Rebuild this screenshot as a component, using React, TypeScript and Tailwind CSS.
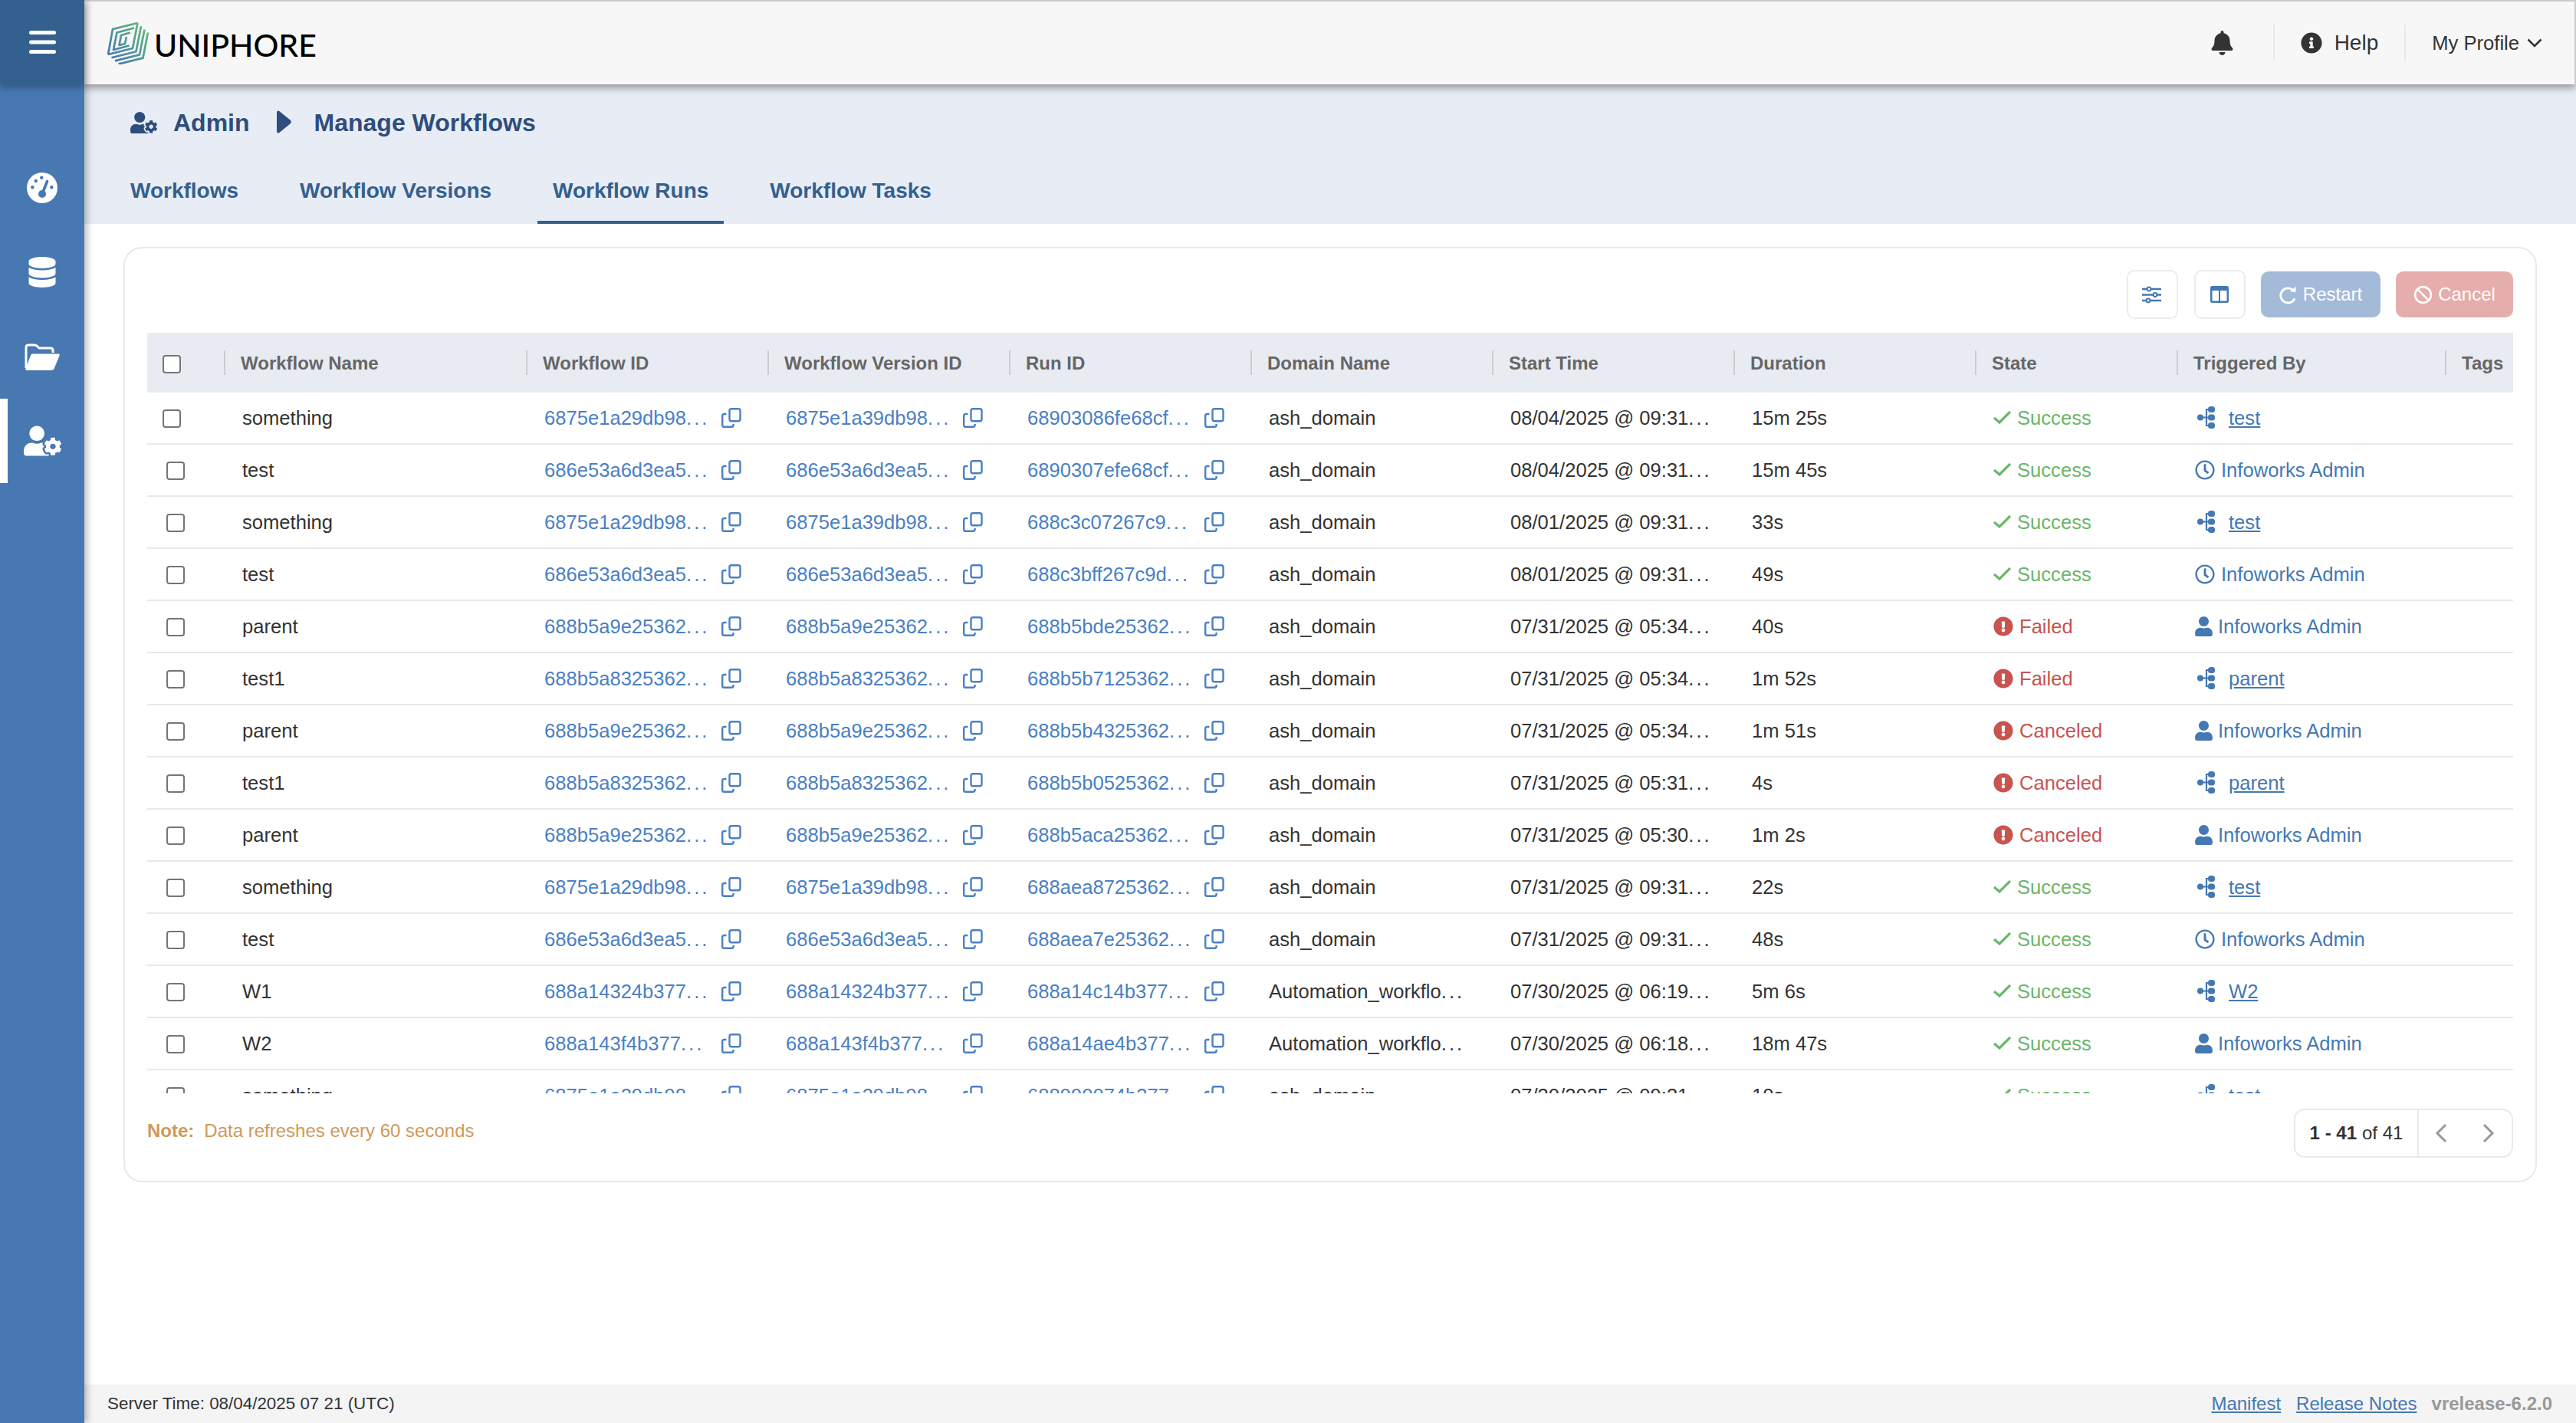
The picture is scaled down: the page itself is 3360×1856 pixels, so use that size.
import React from "react";
import { FaBell, FaInfoCircle, FaDatabase, FaUserCog, FaExclamationCircle, FaUser, FaRegClock } from "react-icons/fa";
import { Ban } from "lucide-react";

const COLS = "grid grid-cols-[101px_394px_315px_315px_315px_315px_315px_315px_263px_350px_88px]";

type Row = {
  name: string; wf: string; ver: string; run: string; domain: string; start: string; dur: string;
  state: "Success" | "Failed" | "Canceled"; kind: "tree" | "clock" | "user"; by: string;
};

const rows: Row[] = [
  { name: "something", wf: "6875e1a29db98", ver: "6875e1a39db98", run: "68903086fe68cf", domain: "ash_domain", start: "08/04/2025 @ 09:31", dur: "15m 25s", state: "Success", kind: "tree", by: "test" },
  { name: "test", wf: "686e53a6d3ea5", ver: "686e53a6d3ea5", run: "6890307efe68cf", domain: "ash_domain", start: "08/04/2025 @ 09:31", dur: "15m 45s", state: "Success", kind: "clock", by: "Infoworks Admin" },
  { name: "something", wf: "6875e1a29db98", ver: "6875e1a39db98", run: "688c3c07267c9", domain: "ash_domain", start: "08/01/2025 @ 09:31", dur: "33s", state: "Success", kind: "tree", by: "test" },
  { name: "test", wf: "686e53a6d3ea5", ver: "686e53a6d3ea5", run: "688c3bff267c9d", domain: "ash_domain", start: "08/01/2025 @ 09:31", dur: "49s", state: "Success", kind: "clock", by: "Infoworks Admin" },
  { name: "parent", wf: "688b5a9e25362", ver: "688b5a9e25362", run: "688b5bde25362", domain: "ash_domain", start: "07/31/2025 @ 05:34", dur: "40s", state: "Failed", kind: "user", by: "Infoworks Admin" },
  { name: "test1", wf: "688b5a8325362", ver: "688b5a8325362", run: "688b5b7125362", domain: "ash_domain", start: "07/31/2025 @ 05:34", dur: "1m 52s", state: "Failed", kind: "tree", by: "parent" },
  { name: "parent", wf: "688b5a9e25362", ver: "688b5a9e25362", run: "688b5b4325362", domain: "ash_domain", start: "07/31/2025 @ 05:34", dur: "1m 51s", state: "Canceled", kind: "user", by: "Infoworks Admin" },
  { name: "test1", wf: "688b5a8325362", ver: "688b5a8325362", run: "688b5b0525362", domain: "ash_domain", start: "07/31/2025 @ 05:31", dur: "4s", state: "Canceled", kind: "tree", by: "parent" },
  { name: "parent", wf: "688b5a9e25362", ver: "688b5a9e25362", run: "688b5aca25362", domain: "ash_domain", start: "07/31/2025 @ 05:30", dur: "1m 2s", state: "Canceled", kind: "user", by: "Infoworks Admin" },
  { name: "something", wf: "6875e1a29db98", ver: "6875e1a39db98", run: "688aea8725362", domain: "ash_domain", start: "07/31/2025 @ 09:31", dur: "22s", state: "Success", kind: "tree", by: "test" },
  { name: "test", wf: "686e53a6d3ea5", ver: "686e53a6d3ea5", run: "688aea7e25362", domain: "ash_domain", start: "07/31/2025 @ 09:31", dur: "48s", state: "Success", kind: "clock", by: "Infoworks Admin" },
  { name: "W1", wf: "688a14324b377", ver: "688a14324b377", run: "688a14c14b377", domain: "Automation_workflo", start: "07/30/2025 @ 06:19", dur: "5m 6s", state: "Success", kind: "tree", by: "W2" },
  { name: "W2", wf: "688a143f4b377", ver: "688a143f4b377", run: "688a14ae4b377", domain: "Automation_workflo", start: "07/30/2025 @ 06:18", dur: "18m 47s", state: "Success", kind: "user", by: "Infoworks Admin" },
  { name: "something", wf: "6875e1a29db98", ver: "6875e1a39db98", run: "688990074b377", domain: "ash_domain", start: "07/30/2025 @ 09:31", dur: "10s", state: "Success", kind: "tree", by: "test" },
];

const headers = ["Workflow Name", "Workflow ID", "Workflow Version ID", "Run ID", "Domain Name", "Start Time", "Duration", "State", "Triggered By", "Tags"];

function Logo() {
  const stack = [0, 1, 2, 3].map((k) => {
    const dx = k * 4.5;
    const dy = k * 4.2;
    return `${11 + dx},${50 + dy} ${43 + dx},${42 + dy} ${49.5 + dx},${9 + dy}`;
  });
  return (
    <svg viewBox="10 8 55 55" className="w-[55px] h-[55px] shrink-0" fill="none">
      <defs>
        <linearGradient id="lg" gradientUnits="userSpaceOnUse" x1="12" y1="56" x2="58" y2="16">
          <stop offset="0" stopColor="#3f74bb" />
          <stop offset="1" stopColor="#5fb779" />
        </linearGradient>
      </defs>
      <g stroke="url(#lg)" strokeWidth="2.7" strokeLinejoin="round">
        <polyline points="49.5,9 17,17 11,50" />
        {stack.map((p) => (
          <polyline key={p} points={p} />
        ))}
        <polyline points="45,15.5 22.5,21.5 18,44 38.5,38.5" />
        <polyline points="40,21.5 28,25 25.5,38 33,36 35,27" />
      </g>
    </svg>
  );
}

function Gauge() {
  return (
    <svg viewBox="0 0 40 40" className="w-[40px] h-[40px]">
      <circle cx="20" cy="20" r="20" fill="#fff" />
      <g fill="#4778b2">
        <circle cx="11.7" cy="11" r="2.2" />
        <circle cx="19.3" cy="6.7" r="2.2" />
        <circle cx="7.3" cy="19.3" r="2.2" />
        <circle cx="32.3" cy="19.3" r="2.2" />
        <circle cx="20" cy="28" r="5" />
      </g>
      <line x1="20.5" y1="27" x2="26.5" y2="11.5" stroke="#4778b2" strokeWidth="3.6" strokeLinecap="round" />
    </svg>
  );
}

function FolderIcon() {
  return (
    <svg viewBox="0 0 46 35" className="w-[46px] h-[35px]">
      <path d="M2 32V5Q2 2 5 2H13Q15 2 16.5 3.5L19 6H34Q37 6 37 9V12" fill="none" stroke="#fff" strokeWidth="3" strokeLinejoin="round" />
      <path d="M10.5 13.5H44Q46.5 13.5 45.5 16L38.5 33Q37.5 35 35 35H3Q0.5 35 1.5 32.5L8 15.5Q8.7 13.5 10.5 13.5Z" fill="#fff" />
    </svg>
  );
}

function CopyIcon() {
  return (
    <svg viewBox="0 0 26 26" className="w-[26px] h-[26px] shrink-0" fill="none" stroke="#4a80c4" strokeWidth="2.4">
      <rect x="10.5" y="1.2" width="14" height="16" rx="2.5" />
      <path d="M6.5 8H3.5Q1.2 8 1.2 10.2V22.5Q1.2 24.8 3.5 24.8H13Q15.6 24.8 15.6 22.5V21" />
    </svg>
  );
}

function TreeIcon() {
  return (
    <svg viewBox="0 0 23 29" className="w-[23px] h-[29px] shrink-0 ml-[3px] mr-[18px]" fill="#4478b3">
      <circle cx="4" cy="14.5" r="4" />
      <rect x="14" y="0" width="9" height="8" rx="3.5" />
      <rect x="14" y="10.5" width="9" height="8" rx="3.5" />
      <rect x="14" y="21" width="9" height="8" rx="3.5" />
      <path d="M4 14.5H18M17 4H12V25H17" fill="none" stroke="#4478b3" strokeWidth="2.2" />
    </svg>
  );
}

function Check() {
  return (
    <svg viewBox="0 0 23 17" className="w-[23px] h-[17px] shrink-0 mr-[8px]" fill="none" stroke="#6ab76b" strokeWidth="3.2">
      <polyline points="1,9 8,15 22,1" />
    </svg>
  );
}

function Box() {
  return (
    <input
      type="checkbox"
      readOnly
      className="appearance-none w-[24px] h-[24px] rounded-[4px] border-2 border-[#757575] bg-white"
    />
  );
}

function Dots() {
  return <span className="tracking-[3px]">...</span>;
}

function LinkCell({ text }: { text: string }) {
  return (
    <div className="flex items-center pl-[23px]">
      <span className="w-[231px] whitespace-nowrap text-[#4a80c4]">{text}<Dots /></span>
      <CopyIcon />
    </div>
  );
}

function StateCell({ state }: { state: Row["state"] }) {
  if (state === "Success") {
    return (
      <div className="flex items-center pl-[23px] text-[#6ab76b]">
        <Check />
        <span>Success</span>
      </div>
    );
  }
  return (
    <div className="flex items-center pl-[23px] text-[#c9534f]">
      <FaExclamationCircle className="w-[26px] h-[26px] mr-[8px] shrink-0" />
      <span>{state}</span>
    </div>
  );
}

function ByCell({ kind, by }: { kind: Row["kind"]; by: string }) {
  return (
    <div className="flex items-center pl-[23px] text-[#4478b3]">
      {kind === "tree" && <TreeIcon />}
      {kind === "clock" && <FaRegClock className="w-[26px] h-[26px] mr-[8px] shrink-0" />}
      {kind === "user" && <FaUser className="w-[23px] h-[26px] mr-[7px] shrink-0" />}
      <span className={kind === "tree" ? "underline" : ""}>{by}</span>
    </div>
  );
}

export default function App() {
  return (
    <div className="flex w-full h-screen overflow-hidden bg-white font-['Liberation_Sans',Arial,sans-serif] text-[25.6px] text-[#333]">
      <aside className="relative z-20 w-[110px] shrink-0 bg-[#4778b2] shadow-[4px_0_8px_rgba(0,0,0,0.25)] flex flex-col text-white">
        <div className="h-[110px] bg-[#33608f] shadow-[0_5px_8px_rgba(0,0,0,0.25)] flex items-center justify-center">
          <svg viewBox="0 0 35 30" className="w-[35px] h-[30px]" fill="#fff">
            <rect x="0" y="0" width="35" height="5" rx="2.5" />
            <rect x="0" y="12.5" width="35" height="5" rx="2.5" />
            <rect x="0" y="25" width="35" height="5" rx="2.5" />
          </svg>
        </div>
        <nav className="mt-[80px] flex flex-col">
          <div className="h-[110px] flex items-center justify-center"><Gauge /></div>
          <div className="h-[110px] flex items-center justify-center"><FaDatabase className="w-[36px] h-[40px]" /></div>
          <div className="h-[110px] flex items-center justify-center"><FolderIcon /></div>
          <div className="h-[110px] flex items-center justify-center border-l-[10px] border-white pr-[10px]"><FaUserCog className="w-[49px] h-[40px]" /></div>
        </nav>
      </aside>

      <div className="flex-1 min-w-0 flex flex-col">
        <header className="relative z-10 h-[110px] shrink-0 bg-[#f7f7f7] border-t-2 border-r-2 border-[#cccccc] shadow-[0_4px_10px_rgba(0,0,0,0.4)] flex items-center justify-between pl-[30px] pr-[42px]">
          <div className="flex items-center gap-[6px]">
            <Logo />
            <span className="mt-[5px] font-['Lato',sans-serif] font-medium text-[41px] leading-none text-black">UNIPHORE</span>
          </div>
          <div className="flex items-center text-[#333]">
            <FaBell className="w-[29px] h-[32px]" />
            <div className="ml-[52px] w-[2px] h-[48px] bg-[#e9e9e9]" />
            <FaInfoCircle className="ml-[34px] w-[28px] h-[28px]" />
            <span className="ml-[16px] text-[28px]">Help</span>
            <div className="ml-[34px] w-[2px] h-[48px] bg-[#e9e9e9]" />
            <span className="ml-[34px]">My Profile</span>
            <svg viewBox="0 0 20 12" className="ml-[10px] w-[20px] h-[12px]" fill="none" stroke="#333" strokeWidth="2.6">
              <polyline points="1.5,1.5 10,10 18.5,1.5" />
            </svg>
          </div>
        </header>

        <section className="h-[182px] shrink-0 bg-[#e8ecf4] flex flex-col">
          <div className="h-[100px] flex items-center pl-[60px] text-[32px] font-bold text-[#2e4d7c]">
            <FaUserCog className="w-[35px] h-[28px] mr-[21px]" />
            <span>Admin</span>
            <svg viewBox="0 0 19 30" className="w-[19px] h-[30px] ml-[35px] mr-[30px] -mt-[2px]" fill="#2e4d7c">
              <path d="M3 .8L17.5 12.5Q20 15 17.5 17.5L3 29.2Q0 30.5 0 27V3Q0-.5 3 .8Z" />
            </svg>
            <span>Manage Workflows</span>
          </div>
          <nav className="h-[82px] flex gap-[40px] pl-[40px] text-[28px] font-bold text-[#33608f]">
            <div className="px-[20px] flex items-center border-b-4 border-transparent">Workflows</div>
            <div className="px-[20px] flex items-center border-b-4 border-transparent">Workflow Versions</div>
            <div className="px-[20px] flex items-center border-b-4 border-[#33608f]">Workflow Runs</div>
            <div className="px-[20px] flex items-center border-b-4 border-transparent">Workflow Tasks</div>
          </nav>
        </section>

        <main className="flex-1 min-h-0 pt-[30px] pl-[51px] pr-[51px]">
          <div className="h-[1220px] rounded-[24px] border-2 border-[#e9e9e9] pt-[28px] px-[29px]">
            <div className="h-[64px] flex items-center justify-end">
              <button className="w-[67px] h-[64px] pr-[2px] rounded-[10px] border-2 border-[#ececec] bg-white flex items-center justify-center">
                <svg viewBox="0 0 25 23" className="w-[25px] h-[23px]" fill="#fff" stroke="#4478b3" strokeWidth="2.4">
                  <path d="M0 4H25M0 11.5H25M0 19H25" />
                  <circle cx="9" cy="4" r="2.4" strokeWidth="2" />
                  <circle cx="17" cy="11.5" r="2.4" strokeWidth="2" />
                  <circle cx="8" cy="19" r="2.4" strokeWidth="2" />
                </svg>
              </button>
              <button className="ml-[21px] w-[67px] h-[64px] pr-[2px] rounded-[10px] border-2 border-[#ececec] bg-white flex items-center justify-center">
                <svg viewBox="0 0 24 22" className="w-[24px] h-[22px]">
                  <rect width="24" height="22" rx="2.5" fill="#4478b3" />
                  <rect x="2.5" y="6" width="8.5" height="13.5" fill="#fff" />
                  <rect x="13" y="6" width="8.5" height="13.5" fill="#fff" />
                </svg>
              </button>
              <button className="ml-[20px] w-[156px] h-[60px] rounded-[10px] bg-[#a3bbd9] text-white text-[24px] flex items-center justify-center gap-[8px]">
                <svg viewBox="0 0 24 25" className="w-[23px] h-[25px]" fill="none" stroke="#fff" strokeWidth="3">
                  <path d="M21 17.5A10 10 0 1 1 18.5 6" />
                  <path d="M22.5 1V8.5H15Z" fill="#fff" stroke="none" />
                </svg>
                <span>Restart</span>
              </button>
              <button className="ml-[20px] w-[153px] h-[60px] rounded-[10px] bg-[#e5adab] text-white text-[24px] flex items-center justify-center gap-[7px]">
                <Ban className="w-[25px] h-[25px]" strokeWidth={2.5} />
                <span>Cancel</span>
              </button>
            </div>

            <div className="mt-[18px] h-[992px] overflow-hidden">
              <div className={`${COLS} h-[78px] bg-[#e8ecf2] items-center`}>
                <div className="pl-[20px] pt-[3px] flex items-center"><Box /></div>
                {headers.map((h) => (
                  <div key={h} className="-ml-px h-[32px] border-l-2 border-[#cccccc] pl-[20px] flex items-center text-[24px] font-bold text-[#666]">
                    <span className="mt-[2px]">{h}</span>
                  </div>
                ))}
              </div>
              {rows.map((r, i) => (
                <div key={i} className={`${COLS} h-[68px] border-b-2 border-[#e9e9e9] items-center`}>
                  <div className={`${i === 0 ? "pl-[20px]" : "pl-[25px]"} pt-[2px] flex items-center`}><Box /></div>
                  <div className="pl-[23px]">{r.name}</div>
                  <LinkCell text={r.wf} />
                  <LinkCell text={r.ver} />
                  <LinkCell text={r.run} />
                  <div className="pl-[23px] whitespace-nowrap">
                    {r.domain}
                    {r.domain.startsWith("Automation") && <Dots />}
                  </div>
                  <div className="pl-[23px] whitespace-nowrap">{r.start}<Dots /></div>
                  <div className="pl-[23px]">{r.dur}</div>
                  <StateCell state={r.state} />
                  <ByCell kind={r.kind} by={r.by} />
                  <div />
                </div>
              ))}
            </div>

            <div className="mt-[20px] flex items-center justify-between">
              <div className="text-[24px] text-[#d1985a] -mt-[6px]">
                <span className="font-bold">Note:</span>
                <span className="ml-[13px]">Data refreshes every 60 seconds</span>
              </div>
              <div className="h-[64px] w-[286px] rounded-[14px] border-2 border-[#e9e9e9] flex items-center text-[24px]">
                <div className="w-[161px] h-full border-r-2 border-[#e9e9e9] flex items-center justify-center">
                  <span className="font-bold">1 - 41</span>
                  <span className="ml-[7px]">of 41</span>
                </div>
                <svg viewBox="0 0 16 26" className="ml-[21px] w-[16px] h-[26px]" fill="none" stroke="#999" strokeWidth="3">
                  <polyline points="14,2 3,13 14,24" />
                </svg>
                <svg viewBox="0 0 16 26" className="ml-[46px] w-[16px] h-[26px]" fill="none" stroke="#999" strokeWidth="3">
                  <polyline points="2,2 13,13 2,24" />
                </svg>
              </div>
            </div>
          </div>
        </main>

        <footer className="h-[50px] shrink-0 bg-[#f4f4f4] flex items-center justify-between pl-[30px] pr-[31px]">
          <span className="text-[22.4px] text-[#333]">Server Time: 08/04/2025 07 21 (UTC)</span>
          <div className="flex items-center text-[24px]">
            <span className="underline text-[#4478b3]">Manifest</span>
            <span className="ml-[20px] underline text-[#4478b3]">Release Notes</span>
            <span className="ml-[19px] font-bold text-[#999]">vrelease-6.2.0</span>
          </div>
        </footer>
      </div>
    </div>
  );
}
